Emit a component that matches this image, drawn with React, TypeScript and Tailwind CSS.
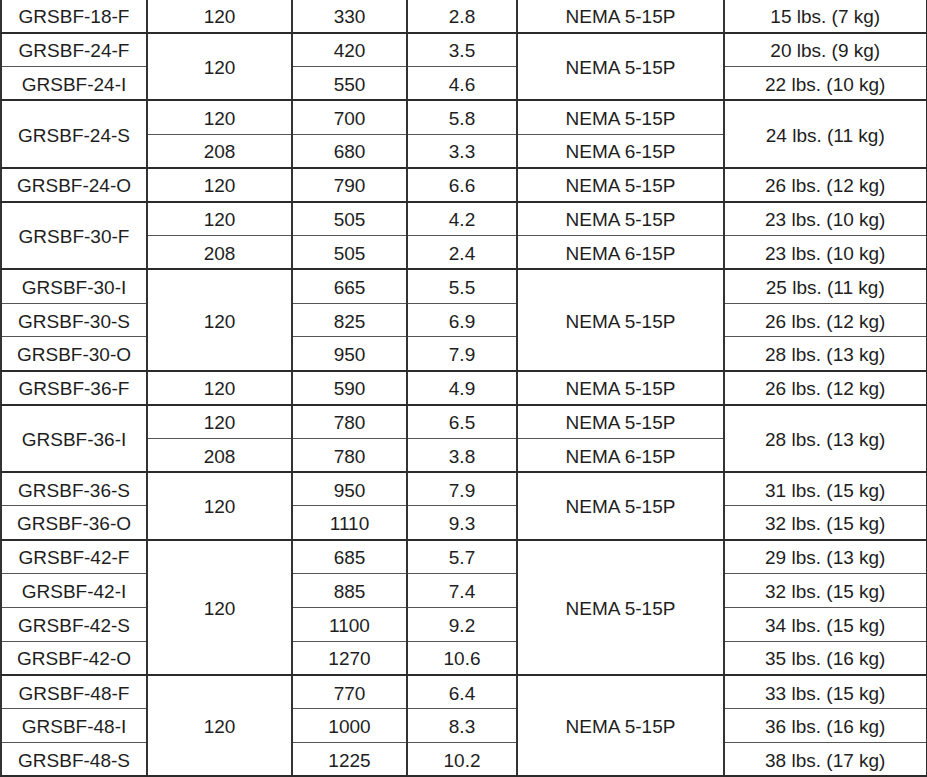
type Cell = { t: string; rs?: number };
type Row = { cells: Cell[]; end?: boolean };

const c = (t: string, rs?: number): Cell => ({ t, rs });

const rows: Row[] = [
  { cells: [c("GRSBF-18-F"), c("120"), c("330"), c("2.8"), c("NEMA 5-15P"), c("15 lbs. (7 kg)")], end: true },
  { cells: [c("GRSBF-24-F"), c("120", 2), c("420"), c("3.5"), c("NEMA 5-15P", 2), c("20 lbs. (9 kg)")] },
  { cells: [c("GRSBF-24-I"), c("550"), c("4.6"), c("22 lbs. (10 kg)")], end: true },
  { cells: [c("GRSBF-24-S", 2), c("120"), c("700"), c("5.8"), c("NEMA 5-15P"), c("24 lbs. (11 kg)", 2)] },
  { cells: [c("208"), c("680"), c("3.3"), c("NEMA 6-15P")], end: true },
  { cells: [c("GRSBF-24-O"), c("120"), c("790"), c("6.6"), c("NEMA 5-15P"), c("26 lbs. (12 kg)")], end: true },
  { cells: [c("GRSBF-30-F", 2), c("120"), c("505"), c("4.2"), c("NEMA 5-15P"), c("23 lbs. (10 kg)")] },
  { cells: [c("208"), c("505"), c("2.4"), c("NEMA 6-15P"), c("23 lbs. (10 kg)")], end: true },
  { cells: [c("GRSBF-30-I"), c("120", 3), c("665"), c("5.5"), c("NEMA 5-15P", 3), c("25 lbs. (11 kg)")] },
  { cells: [c("GRSBF-30-S"), c("825"), c("6.9"), c("26 lbs. (12 kg)")] },
  { cells: [c("GRSBF-30-O"), c("950"), c("7.9"), c("28 lbs. (13 kg)")], end: true },
  { cells: [c("GRSBF-36-F"), c("120"), c("590"), c("4.9"), c("NEMA 5-15P"), c("26 lbs. (12 kg)")], end: true },
  { cells: [c("GRSBF-36-I", 2), c("120"), c("780"), c("6.5"), c("NEMA 5-15P"), c("28 lbs. (13 kg)", 2)] },
  { cells: [c("208"), c("780"), c("3.8"), c("NEMA 6-15P")], end: true },
  { cells: [c("GRSBF-36-S"), c("120", 2), c("950"), c("7.9"), c("NEMA 5-15P", 2), c("31 lbs. (15 kg)")] },
  { cells: [c("GRSBF-36-O"), c("1110"), c("9.3"), c("32 lbs. (15 kg)")], end: true },
  { cells: [c("GRSBF-42-F"), c("120", 4), c("685"), c("5.7"), c("NEMA 5-15P", 4), c("29 lbs. (13 kg)")] },
  { cells: [c("GRSBF-42-I"), c("885"), c("7.4"), c("32 lbs. (15 kg)")] },
  { cells: [c("GRSBF-42-S"), c("1100"), c("9.2"), c("34 lbs. (15 kg)")] },
  { cells: [c("GRSBF-42-O"), c("1270"), c("10.6"), c("35 lbs. (16 kg)")], end: true },
  { cells: [c("GRSBF-48-F"), c("120", 3), c("770"), c("6.4"), c("NEMA 5-15P", 3), c("33 lbs. (15 kg)")] },
  { cells: [c("GRSBF-48-I"), c("1000"), c("8.3"), c("36 lbs. (16 kg)")] },
  { cells: [c("GRSBF-48-S"), c("1225"), c("10.2"), c("38 lbs. (17 kg)")], end: true },
];

export default function App() {
  return (
    <div className="h-[777px] w-[927px] overflow-hidden bg-white font-['Liberation_Sans',Arial,sans-serif] text-[19px] text-[#1e1e1e]">
      <table className="-mt-[2px] w-[926px] table-fixed border-collapse border-r-[3px] border-l-2 border-[#2b2b2b]">
        <colgroup>
          <col className="w-[146px]" />
          <col className="w-[145px]" />
          <col className="w-[115px]" />
          <col className="w-[110px]" />
          <col className="w-[207px]" />
          <col className="w-[203px]" />
        </colgroup>
        <tbody>
          {rows.map((row, ri) => (
            <tr key={ri} className={ri === 0 ? "border-t-2 border-[#2b2b2b]" : ""}>
              {row.cells.map((cell, ci) => {
                const last = ri + (cell.rs ?? 1) - 1;
                const thick = rows[last].end;
                return (
                  <td
                    key={ci}
                    rowSpan={cell.rs}
                    className={
                      "h-[33.8px] p-0 pt-[2px] text-center leading-none border-x-2 border-x-[#333] " +
                      (thick ? "border-b-2 border-b-[#2b2b2b]" : "border-b border-b-[#555]")
                    }
                  >
                    {cell.t}
                  </td>
                );
              })}
            </tr>
          ))}
        </tbody>
      </table>
    </div>
  );
}
